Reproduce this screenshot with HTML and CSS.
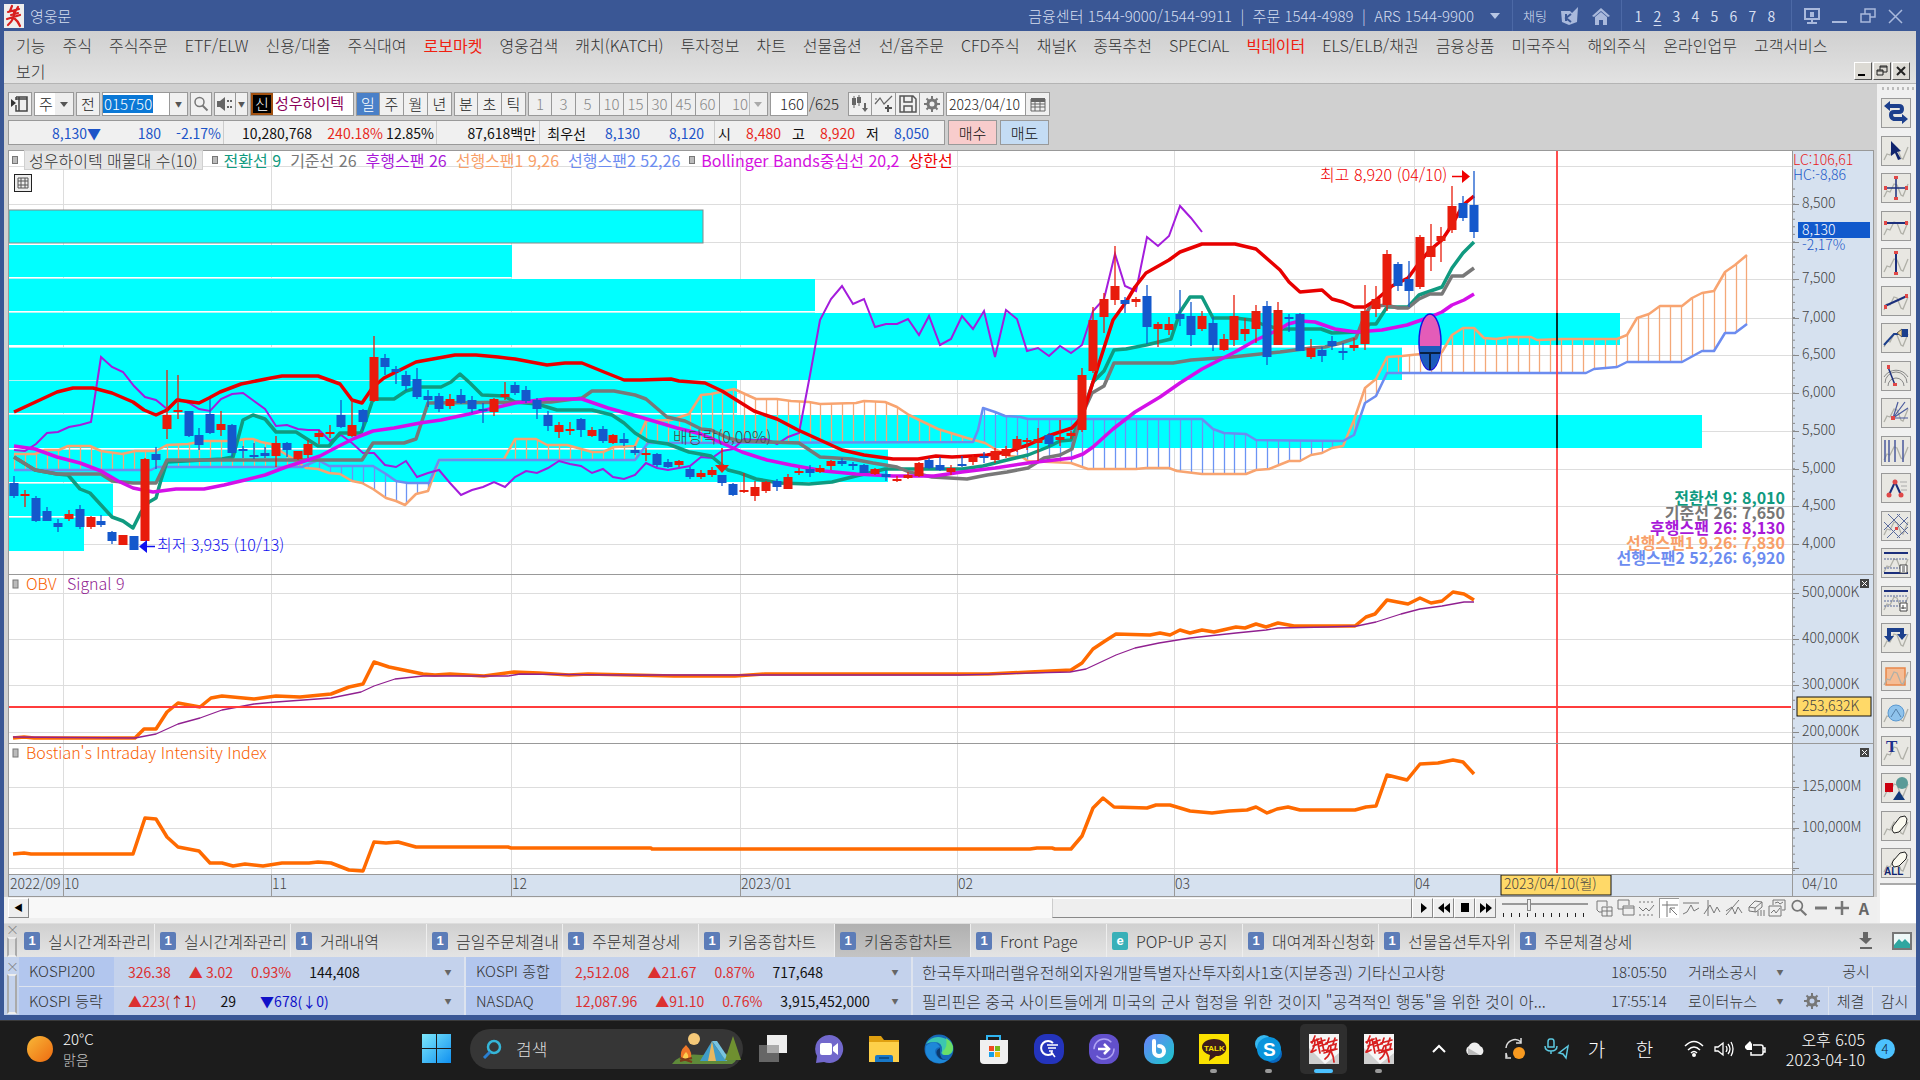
FILE: index.html
```html
<!DOCTYPE html>
<html lang="ko">
<head>
    <meta charset="UTF-8">
    <meta name="viewport" content="width=device-width, initial-scale=1.0">
    <title>영웅문</title>
    <link rel="stylesheet" href="styles.css">
</head>
<body>
    <svg class="defs" aria-hidden="true">
        <symbol id="wave" viewBox="0 0 26 26"><path d="M1 22l3-6 3 1 4-8 3 1 4 10 2 1 5-12" fill="none" stroke="#b0b0a8" stroke-width="1.3"/></symbol>
        <symbol id="hero" viewBox="0 0 30 30"><path d="M0 0h30v30H0z" fill="#f6f6f6"/><path d="M0 14l16 16H0zM16 30L30 19v11z" fill="#cfcfcf"/><path d="M6 2L3 9M2 8l8-3M4 12l8-3M6 6q0 7-4 12M8 5l3 14M3 18l4-2M12 4l3 13M10 8l6-2M11 12l6-2M13 17l4-1M20 4l-2 6M26 4l-2 6M17 9l11-3M20 12l-2 5 8-2 1-5-7 2M15 19l13-4M22 11q0 10-6 14M22 17q3 6 3 11" fill="none" stroke="#d81e1e" stroke-width="1.700" stroke-linecap="round"/></symbol>
        <symbol id="gear" viewBox="0 0 16 16"><circle cx="8" cy="8" r="4" fill="none" stroke="#777" stroke-width="3"/><path d="M8 0v3M8 13v3M0 8h3M13 8h3M2.500 2.500l2 2M11.500 11.500l2 2M2.500 13.500l2-2M11.500 4.500l2-2" stroke="#777" stroke-width="2"/></symbol>
        <symbol id="glass" viewBox="0 0 16 16"><circle cx="6.500" cy="6" r="4.500" fill="none" stroke="#777" stroke-width="1.500"/><path d="M9.500 9.500l5 5" stroke="#777" stroke-width="2"/></symbol>
    </svg>

    <div class="app">
        <header class="titlebar">
            <svg class="logo" viewBox="0 0 20 24"><path d="M0 0h20v24H0z" fill="#eee"/><path d="M8 2L6 7M14 3l-3 5M4 8l11-3M7 11l7-2M3 15l13-4M10 7q1 8-6 14M10 14q4 3 6 8" fill="none" stroke="#d81e1e" stroke-width="2.200" stroke-linecap="round"/></svg>
            <span class="app-name">영웅문</span>
            <span class="contacts">금융센터 1544-9000/1544-9911&nbsp; |&nbsp; 주문 1544-4989&nbsp; |&nbsp; ARS 1544-9900</span>
            <button class="title-btn" aria-label="연락처 더보기"><svg width="10" height="6"><path d="M0 0h10L5 6z" fill="#b7c6e4"/></svg></button>
            <div class="title-tools">
                <button class="title-btn">채팅</button>
                <button class="title-btn" aria-label="키움"><svg width="20" height="20" viewBox="0 0 20 20"><path d="M2 5h9l2 2 6-6-1 15-8 3-7-3z" fill="#a9b9dc"/><path d="M7 8v7M12 8l-5 4 5 4" stroke="#3a5795" stroke-width="2" fill="none"/></svg></button>
                <button class="title-btn" aria-label="홈"><svg width="20" height="20" viewBox="0 0 20 20"><path d="M10 2L1 10l2 1 7-6 7 6 2-1zM4 11l6-5 6 5v8h-4v-5H8v5H4z" fill="#a9b9dc"/></svg></button>
            </div>
            <nav class="screens">
                <button>1</button><button class="current">2</button><button>3</button><button>4</button><button>5</button><button>6</button><button>7</button><button>8</button>
            </nav>
            <div class="window-btns">
                <button class="title-btn" aria-label="화면"><svg width="16" height="18" viewBox="0 0 16 18"><path d="M1 2h14v10H1zM8 12v4M3 16h10" fill="none" stroke="#a9b9dc" stroke-width="2"/><path d="M6 5h4v5H6z" fill="#a9b9dc"/></svg></button>
                <button class="title-btn" aria-label="최소화"><svg width="16" height="18"><path d="M0 14h15v2H0z" fill="#a9b9dc"/></svg></button>
                <button class="title-btn" aria-label="복원"><svg width="16" height="18" viewBox="0 0 16 18"><path d="M1 7h9v8H1zM5 7V2h10v8h-5" fill="none" stroke="#a9b9dc" stroke-width="1.500"/></svg></button>
                <button class="title-btn" aria-label="닫기"><svg width="16" height="18" viewBox="0 0 16 18"><path d="M1 3l13 13M14 3L1 16" stroke="#a9b9dc" stroke-width="1.500"/></svg></button>
            </div>
        </header>

        <nav class="menubar">
            <a href="#">기능</a><a href="#">주식</a><a href="#">주식주문</a><a href="#">ETF/ELW</a><a href="#">신용/대출</a><a href="#">주식대여</a><a href="#" class="hot">로보마켓</a><a href="#">영웅검색</a><a href="#">캐치(KATCH)</a><a href="#">투자정보</a><a href="#">차트</a><a href="#">선물옵션</a><a href="#">선/옵주문</a><a href="#">CFD주식</a><a href="#">채널K</a><a href="#">종목추천</a><a href="#">SPECIAL</a><a href="#" class="hot">빅데이터</a><a href="#">ELS/ELB/채권</a><a href="#">금융상품</a><a href="#">미국주식</a><a href="#">해외주식</a><a href="#">온라인업무</a><a href="#">고객서비스</a>
            <div class="menu-row2">
                <a href="#">보기</a>
                <span class="mdi">
                    <button aria-label="창 최소화"><svg width="12" height="12"><path d="M1 9h7v2H1z"/></svg></button>
                    <button aria-label="창 복원"><svg width="12" height="12"><path d="M1 5h6v5H1zM1 6h6M4 5V1h7v6H7M4 2h7" fill="none" stroke="#222"/></svg></button>
                    <button aria-label="창 닫기"><svg width="12" height="12"><path d="M2 2l8 8M10 2l-8 8" stroke="#222" stroke-width="2"/></svg></button>
                </span>
            </div>
        </nav>

        <div class="work">
            <main class="chart-window">
                <div class="toolbar">
                    <button class="tb icon" aria-label="패널"><svg width="18" height="16"><path d="M5 1h11v14H5V9M5 1v3M8 1v14M5 3h11" fill="none" stroke="#444" stroke-width="1.500"/><path d="M0 3l5 4-5 4z" fill="#333"/></svg></button>
                    <select class="kind" aria-label="구분"><option>주</option></select>
                    <button class="tb">전</button>
                    <div class="code">
                        <input type="text" value="015750" aria-label="종목코드">
                        <button class="tb arrow" aria-label="종목 목록">▼</button>
                    </div>
                    <button class="tb tight" aria-label="종목 검색"><svg width="16" height="16"><use href="#glass"/></svg></button>
                    <div class="joined">
                        <button class="tb tight" aria-label="소리"><svg width="18" height="16"><path d="M1 5h3l5-4v14l-5-4H1z" fill="#666"/><path d="M12 4v2M12 10v2M15 4v2M15 10v2" stroke="#666" stroke-width="2"/></svg></button>
                        <button class="tb arrow slim" aria-label="소리 설정">▼</button>
                    </div>
                    <div class="stock"><b>신</b><span>성우하이텍</span></div>
                    <div class="joined">
                        <button class="tb on">일</button><button class="tb">주</button><button class="tb">월</button><button class="tb">년</button>
                    </div>
                    <div class="joined">
                        <button class="tb">분</button><button class="tb">초</button><button class="tb">틱</button>
                    </div>
                    <div class="joined off">
                        <button class="tb">1</button><button class="tb">3</button><button class="tb">5</button><button class="tb">10</button><button class="tb">15</button><button class="tb">30</button><button class="tb">45</button><button class="tb">60</button>
                        <select class="unit" aria-label="분 단위" disabled><option>10</option></select>
                    </div>
                    <div class="count"><input type="text" value="160" aria-label="봉 개수"><span>/625</span></div>
                    <div class="joined tools">
                        <button class="tb icon" aria-label="차트 종류"><svg width="20" height="20"><path d="M4 2v12M9 1v11" stroke="#666"/><path d="M2 4h4v7H2zM7 3h4v6H7z" fill="#666"/><path d="M15 9v7" stroke="#666" stroke-width="2"/><path d="M12 14h6l-3 4z" fill="#666"/></svg></button>
                        <button class="tb icon" aria-label="지표 추가"><svg width="20" height="20"><path d="M1 10l5-6 4 6 8-8M1 5h2" fill="none" stroke="#666" stroke-width="1.200"/><path d="M14 11v7M11 14h7" stroke="#555" stroke-width="2"/></svg></button>
                        <button class="tb icon" aria-label="저장"><svg width="20" height="20"><path d="M2 2h13l3 3v13H2zM6 2v6h8V2M6 18v-6h8v6" fill="none" stroke="#555" stroke-width="1.500"/></svg></button>
                        <button class="tb icon" aria-label="설정"><svg width="16" height="16"><use href="#gear"/></svg></button>
                    </div>
                    <div class="date"><input type="text" value="2023/04/10" aria-label="날짜"><button class="tb" aria-label="달력"><svg width="16" height="16"><path d="M1 3h14v12H1zM1 8h14M1 11h14M5 5v10M10 5v10" fill="none" stroke="#666"/><path d="M1 2h14v4H1z" fill="#666"/></svg></button></div>
                </div>

                <div class="quote">
                    <div class="quote-box">
                        <div class="cell q-price"><span class="down">8,130▼</span><span class="down">180</span><span class="down">-2.17%</span></div>
                        <div class="cell q-volume"><span>10,280,768</span><span class="up">240.18%</span><span>12.85%</span></div>
                        <div class="cell q-amount"><span>87,618백만</span></div>
                        <div class="cell q-best"><span>최우선</span><span class="down">8,130</span><span class="down">8,120</span></div>
                        <div class="cell q-ohl"><span>시</span><span class="up">8,480</span><span>고</span><span class="up">8,920</span><span>저</span><span class="down">8,050</span></div>
                    </div>
                    <button class="buy">매수</button>
                    <button class="sell">매도</button>
                </div>

                <div class="chart">
                    <svg id="chart" viewBox="8 150 1866 747" role="img" aria-label="성우하이텍 일봉 차트"></svg>
                    <div class="legend">
                        <span class="box"></span><span class="picked">성우하이텍 매물대 수(10)</span>
                        <span class="box"></span><span class="teal">전환선 9</span><span class="gray">기준선 26</span><span class="purple">후행스팬 26</span><span class="orange">선행스팬1 9,26</span><span class="blue">선행스팬2 52,26</span>
                        <span class="box"></span><span class="magenta">Bollinger Bands중심선 20,2</span><span class="red">상한선</span>
                    </div>
                    <button class="grid-btn" aria-label="데이터 표"><svg width="12" height="12"><path d="M1 1h10v10H1zM1 4h10M1 8h10M4 1v10M8 1v10" fill="none" stroke="#555"/></svg></button>
                </div>

                <div class="scroll-row">
                    <button class="sb" aria-label="왼쪽으로">◀</button>
                    <div class="track"><div class="thumb"></div></div>
                    <button class="sb" aria-label="오른쪽으로"><svg width="16" height="14"><path d="M6 2l6 5-6 5z"/></svg></button>
                    <button class="sb" aria-label="빨리 뒤로"><svg width="16" height="14"><path d="M8 2v10L2 7zM14 2v10L8 7z"/></svg></button>
                    <button class="sb" aria-label="정지"><svg width="16" height="14"><path d="M4 2h8v9H4z"/></svg></button>
                    <button class="sb" aria-label="빨리 앞으로"><svg width="16" height="14"><path d="M2 2v10l6-5zM8 2v10l6-5z"/></svg></button>
                    <input class="speed" type="range" min="0" max="10" value="3" aria-label="재생 속도">
                    <div class="mini-tools">
                        <button aria-label="창 추가"><svg viewBox="0 0 18 18"><path d="M2 2h10v5M7 13H4l-2-2V2M7 8h10v9H7zM12 8v9M7 12h10"/></svg></button>
                        <button aria-label="창 겹치기"><svg viewBox="0 0 18 18"><path d="M1 1h11v5M6 10H1V1M6 7h11v9H6zM6 9h11"/></svg></button>
                        <button aria-label="영역"><svg viewBox="0 0 18 18"><path d="M1 3h16M1 16h16" stroke-dasharray="2 2"/><path d="M1 8l4 4 3-3 3 3 5-6"/></svg></button>
                        <button class="pressed" aria-label="십자선"><svg viewBox="0 0 18 18"><path d="M1 5h16M6 1v16M9 8l7 7M9 13V8h5"/></svg></button>
                        <button aria-label="수평선"><svg viewBox="0 0 18 18"><path d="M1 4h16M1 15l4-2 4-7 3 6 5-3"/></svg></button>
                        <button aria-label="수직선"><svg viewBox="0 0 18 18"><path d="M5 1v16M1 15l6-9 4 8 3-6 3 5"/></svg></button>
                        <button aria-label="추세선"><svg viewBox="0 0 18 18"><path d="M1 16L14 1M1 12l6-4 3 7 3-7 4 6"/></svg></button>
                        <button aria-label="전체 지우기"><svg viewBox="0 0 18 18"><path d="M2 8l6-6 7 1v5l-6 5-7-1zM2 8l6 1 7-6M8 9v4M11 12v5M14 11v6M17 11v6"/></svg></button>
                        <button aria-label="차트 복사"><svg viewBox="0 0 18 18"><path d="M5 6V1h12v10h-3M1 7h12v10H1zM3 14l3-3 2 3 4-5M7 4l3-1 2 2 3-2"/></svg></button>
                        <button aria-label="확대경"><svg viewBox="0 0 16 16"><use href="#glass"/></svg></button>
                        <button aria-label="축소"><svg viewBox="0 0 18 18"><path d="M3 9h12" stroke-width="3"/></svg></button>
                        <button aria-label="확대"><svg viewBox="0 0 18 18"><path d="M2 9h14M9 2v14" stroke-width="2.500"/></svg></button>
                        <button class="letter">A</button>
                    </div>
                </div>
            </main>

            <aside class="palette">
                <div class="grip"></div>
                <div class="palette-tools">
                    <button aria-label="전환"><svg viewBox="0 0 26 26"><path d="M5 6h11q3 0 3 3t-3 3h-5q-3 0-3 3t3 4h9" fill="none" stroke="#1c3f8c" stroke-width="4"/><path d="M7 1v10L1 6zM19 14v10l6-5z" fill="#1c3f8c"/></svg></button>
                    <button aria-label="선택"><svg viewBox="0 0 26 26"><use href="#wave"/><path d="M8 3l10 10-4 1 4 7-3 1-3-7-4 3z" fill="#10246e"/></svg></button>
                    <button aria-label="십자선"><svg viewBox="0 0 26 26"><use href="#wave"/><path d="M2 13h22M13 2v22" stroke="#1c2f7c" stroke-width="1.500"/><path d="M1 11h3v4H1zM22 11h3v4h-3zM11 1h4v3h-4zM11 22h4v3h-4z" fill="#e04848"/></svg></button>
                    <button aria-label="수평선"><svg viewBox="0 0 26 26"><use href="#wave"/><path d="M2 10h22" stroke="#1c2f7c" stroke-width="2"/><path d="M1 8h3v4H1zM22 8h3v4h-3z" fill="#e04848"/></svg></button>
                    <button aria-label="수직선"><svg viewBox="0 0 26 26"><use href="#wave"/><path d="M13 2v22" stroke="#1c2f7c" stroke-width="2"/><path d="M11 1h4v3h-4zM11 22h4v3h-4z" fill="#e04848"/></svg></button>
                    <button aria-label="추세선"><svg viewBox="0 0 26 26"><use href="#wave"/><path d="M2 18L24 8" stroke="#1c2f7c" stroke-width="2"/><path d="M1 17h3v4H1zM22 6h3v4h-3z" fill="#e04848"/></svg></button>
                    <button aria-label="연필"><svg viewBox="0 0 26 26"><use href="#wave"/><path d="M1 20L11 9h7" fill="none" stroke="#1c3f8c" stroke-width="2"/><path d="M14 8l5-4v8z" fill="#f0d090" stroke="#555"/><path d="M19 4h6v8h-6z" fill="#1c3f8c"/></svg></button>
                    <button aria-label="피보나치 원호"><svg viewBox="0 0 26 26"><path d="M2 20a11 11 0 0 1 22 0M5 23a8 8 0 0 1 16 0M1 14a14 14 0 0 1 24 0" fill="none" stroke="#888"/><path d="M5 4l7 18" stroke="#1c2f7c" stroke-width="1.500"/><path d="M4 2h3v4H4zM10 20h4v3h-4z" fill="#e04848"/></svg></button>
                    <button aria-label="팬"><svg viewBox="0 0 26 26"><use href="#wave"/><path d="M10 18L15 2M10 18L22 2M10 18l15-10M10 18h15" stroke="#4a5a9c" stroke-width="1.200"/><path d="M8 16h4v4H8z" fill="#e04848"/></svg></button>
                    <button aria-label="시간대"><svg viewBox="0 0 26 26"><use href="#wave"/><path d="M2 2v22M6 2v22M12 2v22M20 2v22" stroke="#4a5a9c" stroke-width="1.500"/></svg></button>
                    <button aria-label="각도"><svg viewBox="0 0 26 26"><path d="M6 20l6-13 6 13" fill="none" stroke="#1c2f7c" stroke-width="2"/><path d="M17 7h7M18 11h6M18 15h6" stroke="#aaa"/><circle cx="12" cy="7" r="2.500" fill="#e04848"/><circle cx="6" cy="20" r="2.500" fill="#e04848"/><circle cx="18" cy="20" r="2.500" fill="#e04848"/></svg></button>
                    <button aria-label="격자"><svg viewBox="0 0 26 26"><use href="#wave"/><path d="M1 9l16 16M5 1l20 20M14 1l11 11M1 17L17 1M4 25L25 4M14 25l11-11" stroke="#5a6a9c"/><path d="M12 14h3v3h-3z" fill="#e04848"/></svg></button>
                    <button aria-label="밴드 3"><svg viewBox="0 0 26 26"><use href="#wave"/><path d="M1 3h24M1 23h24" stroke="#1c2f7c" stroke-width="2"/><path d="M1 9h24M1 18h24" stroke="#5a6a9c" stroke-dasharray="2 1"/><path d="M17 15h7v8h-7zM19 17h3M19 19h3M19 21h3" fill="#fff" stroke="#444"/></svg></button>
                    <button aria-label="밴드 4"><svg viewBox="0 0 26 26"><use href="#wave"/><path d="M1 3h24" stroke="#1c2f7c" stroke-width="2"/><path d="M1 8h24M1 13h24M1 18h24" stroke="#5a6a9c" stroke-dasharray="2 1"/><path d="M17 15h7v8h-7zM20 17v4M18 20h5" fill="#fff" stroke="#444"/></svg></button>
                    <button aria-label="되돌림"><svg viewBox="0 0 26 26"><use href="#wave"/><path d="M6 12V5h13v5" fill="none" stroke="#1c3f8c" stroke-width="4"/><path d="M1 11h10l-5 6zM14 9h10l-5 6z" fill="#1c3f8c"/></svg></button>
                    <button aria-label="사각형"><svg viewBox="0 0 26 26"><path d="M3 5h19v17H3z" fill="#f5bc94" stroke="#e8864a" stroke-width="1.500"/><use href="#wave"/></svg></button>
                    <button aria-label="원"><svg viewBox="0 0 26 26"><use href="#wave"/><circle cx="13" cy="13" r="8" fill="#8fc3ec" stroke="#5a98d0"/><path d="M8 17l5-8 5 8" fill="none" stroke="#5580a8"/></svg></button>
                    <button aria-label="문자"><svg viewBox="0 0 26 26"><use href="#wave"/><text x="3" y="14" class="ico-t">T</text></svg></button>
                    <button aria-label="도형"><svg viewBox="0 0 26 26"><use href="#wave"/><path d="M2 8h8v9H2z" fill="#cc0010"/><circle cx="19" cy="8" r="6" fill="#5a9a98"/><path d="M16 16l6 9H10z" fill="#123a7c"/></svg></button>
                    <button aria-label="지우개"><svg viewBox="0 0 26 26"><use href="#wave"/><path d="M10 13l7-9 5-1 2 3-1 5-7 8-5 1-2-3z" fill="#fbfaf0" stroke="#222"/></svg></button>
                    <button aria-label="모두 지우기"><svg viewBox="0 0 26 26"><use href="#wave"/><path d="M10 11l7-8 5-1 2 3-1 4-7 7-5 1-2-3z" fill="#fbfaf0" stroke="#222"/><text x="1" y="25" class="ico-all">ALL</text></svg></button>
                </div>
                <div class="palette-rest"></div>
            </aside>
        </div>

        <nav class="tabs">
            <span class="handle">×</span>
            <button><i>1</i>실시간계좌관리</button>
            <button><i>1</i>실시간계좌관리</button>
            <button><i>1</i>거래내역</button>
            <button><i>1</i>금일주문체결내</button>
            <button><i>1</i>주문체결상세</button>
            <button><i>1</i>키움종합차트</button>
            <button class="active"><i>1</i>키움종합차트</button>
            <button><i>1</i>Front Page</button>
            <button><i class="web">e</i>POP-UP 공지</button>
            <button><i>1</i>대여계좌신청화</button>
            <button><i>1</i>선물옵션투자위</button>
            <button><i>1</i>주문체결상세</button>
            <span class="tabs-end">
                <svg width="14" height="18"><path d="M4 0h5v6h4l-6 6-7-6h4zM1 15h12v2H1z" fill="#666"/></svg>
                <svg class="pic" width="20" height="18"><path d="M1 1h18v16H1z" fill="#eef8f8" stroke="#777" stroke-width="2"/><path d="M2 13l5-6 3 3 3-3 5 5v4H2z" fill="#2fa6a0"/></svg>
            </span>
        </nav>

        <section class="ticker">
            <span class="handle">×</span>
            <div class="index">
                <b>KOSPI200</b>
                <p><span class="rise">326.38</span><span class="rise">▲ 3.02</span><span class="rise">0.93%</span><span>144,408</span></p>
                <button aria-label="지수 선택">▼</button>
            </div>
            <div class="index">
                <b>KOSPI 종합</b>
                <p><span class="rise">2,512.08</span><span class="rise">▲21.67</span><span class="rise">0.87%</span><span>717,648</span></p>
                <button aria-label="지수 선택">▼</button>
            </div>
            <div class="news">
                <a href="#">한국투자패러랠유전해외자원개발특별자산투자회사1호(지분증권) 기타신고사항</a>
                <time>18:05:50</time><span class="source">거래소공시</span><button aria-label="공시 선택">▼</button><span class="side wide">공시</span>
            </div>
            <div class="index">
                <b>KOSPI 등락</b>
                <p class="wide"><span class="rise">▲223(<em>↑1</em>)</span><span>29</span><span class="fall">▼678(↓0)</span></p>
                <button aria-label="지수 선택">▼</button>
            </div>
            <div class="index">
                <b>NASDAQ</b>
                <p><span class="rise">12,087.96</span><span class="rise">▲91.10</span><span class="rise">0.76%</span><span>3,915,452,000</span></p>
                <button aria-label="지수 선택">▼</button>
            </div>
            <div class="news">
                <a href="#">필리핀은 중국 사이트들에게 미국의 군사 협정을 위한 것이지 "공격적인 행동"을 위한 것이 아...</a>
                <time>17:55:14</time><span class="source">로이터뉴스</span><button aria-label="뉴스 선택">▼</button><svg class="cog" width="16" height="16"><use href="#gear"/></svg><span class="side">체결</span><span class="side">감시</span>
            </div>
        </section>
    </div>

    <footer class="taskbar">
        <div class="weather">
            <svg width="26" height="26"><defs><linearGradient id="sun" x2="1" y2="1"><stop stop-color="#f8b838"/><stop offset="1" stop-color="#ee6a10"/></linearGradient></defs><circle cx="13" cy="13" r="13" fill="url(#sun)"/></svg>
            <span>20°C<br><small>맑음</small></span>
        </div>
        <div class="apps">
            <button aria-label="시작"><svg width="30" height="30" viewBox="0 0 30 30"><defs><linearGradient id="win" x2="1" y2="1"><stop stop-color="#7de8fb"/><stop offset="1" stop-color="#1090f0"/></linearGradient></defs><path d="M0 0h14v14H0zM15 0h14v14H15zM0 15h14v14H0zM15 15h14v14H15z" fill="url(#win)"/></svg></button>
            <label class="search">
                <svg width="20" height="20"><circle cx="12" cy="8" r="6" fill="none" stroke="#35b6d8" stroke-width="2.500"/><path d="M8 13l-6 6" stroke="#2a7fd0" stroke-width="3"/></svg>
                <input type="text" placeholder="검색" aria-label="검색">
                <svg width="70" height="32" viewBox="0 0 70 32"><path d="M0 31q8-12 30-9 25-3 34 0 2 6-4 9z" fill="#5f8a3a"/><circle cx="22" cy="6" r="6" fill="#f4c878"/><path d="M40 8l14 20H28z" fill="#3f9cc8"/><path d="M40 8l4 20h-8z" fill="#e8b860"/><path d="M40 8l14 20 3-2L45 8z" fill="#78c4e0"/><path d="M14 12q8 8 4 15H10q-4-8 4-15z" fill="#f07828"/><path d="M14 19q4 4 1 8h-4q-1-4 3-8z" fill="#fcd050"/><path d="M8 28l12-3M8 25l12 4" stroke="#7a3a18" stroke-width="2"/><path d="M61 3l8 24H53z" fill="#6f9030"/></svg>
            </label>
            <button aria-label="작업 보기"><svg width="30" height="30"><path d="M0 11h20v17H0z" fill="#666"/><path d="M8 1h20v18H8z" fill="#eee"/><path d="M8 11h12v8H8z" fill="#aaa"/></svg></button>
            <button aria-label="채팅"><svg width="30" height="30"><path d="M15 1a14 14 0 1 1-5 27l-8 1 1-7A14 14 0 0 1 15 1z" fill="#7268cc"/><rect x="6" y="9" width="12" height="12" rx="2" fill="#fff"/><path d="M19 13l5-4v12l-5-4z" fill="#fff"/></svg></button>
            <button aria-label="탐색기"><svg width="30" height="30"><path d="M0 2h12l3 4h15v22H0z" fill="#e0a010"/><path d="M0 8h30v20H0z" fill="#fdd04a"/><path d="M6 28v-5q0-2 2-2h14q2 0 2 2v5z" fill="#1878c8"/><path d="M10 24h10" stroke="#0d508c" stroke-width="2"/></svg></button>
            <button aria-label="Edge"><svg width="30" height="30"><circle cx="15" cy="15" r="14.500" fill="#1668b8"/><path d="M2 10A15 15 0 0 1 29 14q0 8-9 7-4-1-2-4 1-9-8-9-5 0-8 2z" fill="#3cc6b0"/><path d="M22 4q8 5 7 11-1 6-8 6-4-1-2-4 5-4 3-13z" fill="#6ade68"/><path d="M2 12q9-8 14 1-7 1-4 8 4 7 13 4Q16 33 6 26 0 20 2 12z" fill="#1e88d8"/><path d="M16 14q-5 2-3 7 4 7 13 4-10 3-10-7z" fill="#0c3a6c"/></svg></button>
            <button aria-label="Store"><svg width="30" height="30"><path d="M8 7V2h13v5" fill="none" stroke="#30b4f0" stroke-width="2"/><path d="M1 6h28v20q0 4-4 4H5q-4 0-4-4z" fill="#f0f0f0"/><path d="M10 12h5v5h-5z" fill="#f04a20"/><path d="M16 12h5v5h-5z" fill="#78b818"/><path d="M10 18h5v5h-5z" fill="#18a0e8"/><path d="M16 18h5v5h-5z" fill="#f8b810"/></svg></button>
            <button aria-label="검색 도구"><svg width="30" height="30"><rect width="30" height="30" rx="12" fill="#2434bc"/><path d="M19 9a7 7 0 1 0 0 10" fill="none" stroke="#fff" stroke-width="2"/><path d="M17 18l4 5M13 11h11M14 14h8M15 17h4" stroke="#fff" stroke-width="1.500"/></svg></button>
            <button aria-label="이동"><svg width="30" height="30"><rect width="30" height="30" rx="12" fill="#6250cc"/><circle cx="15" cy="15" r="10" fill="none" stroke="#b0a4f4" stroke-width="1.500" stroke-dasharray="24 7"/><path d="M9 15h10M15 10l5 5-5 5" fill="none" stroke="#fff" stroke-width="2.500"/></svg></button>
            <button aria-label="빅스비"><svg width="30" height="30"><defs><linearGradient id="bx" x2="1" y2="1"><stop stop-color="#6a80fc"/><stop offset="1" stop-color="#18c8c8"/></linearGradient></defs><rect width="30" height="30" rx="12" fill="url(#bx)"/><path d="M10 7v10a5 5 0 1 0 5-5" fill="none" stroke="#fff" stroke-width="4" stroke-linecap="round"/></svg></button>
            <button class="run" aria-label="카카오톡"><svg width="30" height="30"><path d="M0 0h30v30H0z" fill="#fae100"/><path d="M15 5c16 0 16 17 2 17l-7 5 1-6C-2 17 2 5 15 5z" fill="#3b1c1c"/><text x="5" y="17" class="ico-talk">TALK</text></svg></button>
            <button class="run" aria-label="Skype"><svg width="30" height="30"><circle cx="10" cy="10" r="9" fill="#38b8f0"/><circle cx="19" cy="20" r="9" fill="#0868c0"/><circle cx="15" cy="15" r="12" fill="#0a94dc"/><text x="9" y="22" class="ico-s">S</text></svg></button>
            <button class="run focus" aria-label="영웅문"><svg width="30" height="30"><use href="#hero"/></svg></button>
            <button class="run" aria-label="영웅문"><svg width="30" height="30"><use href="#hero"/></svg></button>
        </div>
        <div class="tray">
            <svg width="14" height="10"><path d="M1 8l6-6 6 6" fill="none" stroke="#fff" stroke-width="2"/></svg>
            <svg width="22" height="18"><path d="M5 15a5 5 0 0 1 0-9 6 6 0 0 1 11 0 5 5 0 0 1 1 9z" fill="#eee"/><path d="M4 8l12 7H4z" fill="#bbb"/></svg>
            <svg width="22" height="24"><path d="M2 11a9 9 0 0 1 15-6M17 1v5h-5M2 16v5h5M3 20l-1-4" fill="none" stroke="#ddd" stroke-width="1.500"/><circle cx="15" cy="16" r="6" fill="#f89a20"/></svg>
            <svg width="26" height="22"><path d="M6 1h2q2 0 2 3v5H4V4q0-3 2-3zM1 8q0 5 6 5t6-5M7 13v3" fill="none" stroke="#5cc8e0" stroke-width="1.500"/><path d="M24 8l-9 7 4 1 3 4z" fill="none" stroke="#5cc8e0" stroke-width="1.500"/></svg>
            <span class="ime">가</span>
            <span class="ime">한</span>
            <span class="status">
                <svg width="20" height="18"><path d="M1 6q9-9 18 0M4 10q6-6 12 0M7 13q3-3 6 0" fill="none" stroke="#fff" stroke-width="1.500"/><circle cx="10" cy="15" r="2" fill="#fff"/></svg>
                <svg width="20" height="18"><path d="M1 7h3l5-4v12l-5-4H1zM12 6q2 3 0 6M14 4q4 5 0 10M17 2q4 7 0 14" fill="none" stroke="#fff" stroke-width="1.300"/></svg>
                <svg width="22" height="18"><path d="M9 5h8q2 0 2 2v6q0 2-2 2H7v-3M19 8h2v4h-2" fill="none" stroke="#fff" stroke-width="1.500"/><path d="M1 6L6 1l2 3v6H3l-2-2z" fill="#fff"/></svg>
            </span>
            <time>오후 6:05<br>2023-04-10</time>
            <span class="badge">4</span>
        </div>
    </footer>

    <script src="chart.js"></script>
</body>
</html>
```

FILE: styles.css
```css
* {
    box-sizing: border-box;
}
body {
    margin: 0;
    min-height: 100vh;
    display: flex;
    flex-direction: column;
    background: #1c1c1c;
    color: #333;
    font-family: "Noto Sans CJK KR", "Liberation Sans", sans-serif;
    font-size: 15px;
    line-height: 20px;
    font-weight: 300;
}
button, input, select {
    font: inherit;
    color: inherit;
    margin: 0;
    padding: 0;
    border: 0;
    background: none;
}
select {
    appearance: none;
}
a {
    color: inherit;
    text-decoration: none;
}
svg {
    display: block;
    flex: none;
}
.defs {
    position: absolute;
    width: 0;
    height: 0;
}
.app {
    flex: 1;
    display: flex;
    flex-direction: column;
    padding: 0 4px 5px;
    background: #3a5795;
    white-space: nowrap;
}

/* title bar */
.titlebar {
    display: flex;
    align-items: center;
    height: 31px;
    color: #d5def0;
}
.logo {
    width: 20px;
    height: 24px;
}
.app-name {
    margin-left: 6px;
    flex: 1;
}
.title-btn {
    display: flex;
    align-items: center;
}
.contacts {
    margin-right: 16px;
}
.title-tools, .window-btns {
    display: flex;
    align-items: center;
    height: 31px;
    gap: 12px;
    padding: 0 10px;
    border-left: 1px solid #4c69a6;
}
.title-tools {
    margin-left: 12px;
    font-size: 13px;
}
.screens {
    display: flex;
    height: 31px;
    align-items: center;
    padding: 0 10px 0 7px;
    border-left: 1px solid #4c69a6;
}
.screens button {
    width: 19px;
    font-size: 14px;
    font-weight: 400;
}
.screens .current {
    text-decoration: underline;
    text-underline-offset: 3px;
}
.window-btns {
    padding: 0 12px;
}

/* menu */
.menubar {
    display: flex;
    flex-wrap: wrap;
    column-gap: 17px;
    padding: 0 6px 0 12px;
    height: 53px;
    font-size: 16px;
    line-height: 28px;
    color: #333;
    background: linear-gradient(#d0d0d0, #e2e2e2);
    border-bottom: 1px solid #b4b4b4;
}
.menubar .hot {
    color: #f02010;
    font-weight: 400;
}
.menu-row2 {
    flex-basis: 100%;
    display: flex;
    justify-content: space-between;
    align-items: center;
    line-height: 24px;
}
.mdi {
    display: flex;
    gap: 1px;
}
.mdi button {
    width: 18px;
    height: 18px;
    padding: 2px;
    border: 1px solid;
    border-color: #fff #555 #555 #fff;
    background: #dcdad4;
}

.work {
    flex: 1;
    display: flex;
    background: #d0d0d0;
}
.chart-window {
    flex: 1;
    min-width: 0;
    padding: 8px 3px 0 4px;
}

/* toolbar */
.toolbar {
    display: flex;
    gap: 2px;
    height: 24px;
    color: #222;
}
.tb, .kind {
    display: flex;
    align-items: center;
    justify-content: center;
    width: 24px;
    height: 24px;
    border: 1px solid #999;
    background: #f0f0f0;
}
.kind {
    width: 40px;
    padding-left: 4px;
    background: #fff url("data:image/svg+xml,%3Csvg xmlns='http://www.w3.org/2000/svg' width='18' height='22'%3E%3Cpath d='M0 0h18v22H0z' fill='%23eee'/%3E%3Cpath d='M5 9h8l-4 5z' fill='%23555'/%3E%3C/svg%3E") right center no-repeat;
}
.arrow {
    width: 18px;
    border: 0;
    border-left: 1px solid #999;
    height: 22px;
    font-size: 7px;
    color: #555;
}
.slim {
    width: 12px;
    height: 24px;
    border: 1px solid #999;
}
.tight {
    width: 22px;
}
.code {
    display: flex;
    width: 86px;
    border: 1px solid #999;
    background: #fff;
}
.code input {
    width: 66px;
    height: 18px;
    margin-top: 2px;
    padding-left: 1px;
    color: #fff;
    background: linear-gradient(90deg, #0a78d6 50px, #fff 50px);
}
.joined {
    display: flex;
}
.joined .tb + .tb {
    border-left: 0;
}
.joined .on {
    background: #4a80c8;
    color: #fff;
}
.stock {
    display: flex;
    width: 104px;
    border: 1px solid #999;
    background: #fff;
    color: #8c0058;
    line-height: 20px;
    font-weight: 400;
}
.stock b {
    width: 22px;
    margin-right: 2px;
    border: 2px solid #a05010;
    background: #000;
    color: #fff;
    font-weight: 300;
    line-height: 18px;
    text-align: center;
}
.off .tb, .unit {
    background: #efefef;
    color: #888;
}
.unit {
    width: 48px;
    height: 24px;
    padding-left: 12px;
    border: 1px solid #999;
    border-left: 0;
    opacity: 1;
    background: #efefef url("data:image/svg+xml,%3Csvg xmlns='http://www.w3.org/2000/svg' width='18' height='22'%3E%3Cpath d='M.5 0v22' stroke='%23bbb'/%3E%3Cpath d='M5 9h8l-4 5z' fill='%23aaa'/%3E%3C/svg%3E") right center no-repeat;
}
.count {
    display: flex;
    line-height: 24px;
    width: 76px;
}
.count input {
    width: 38px;
    border: 1px solid #999;
    background: #fff;
    text-align: right;
    padding-right: 3px;
    margin-right: 1px;
}
.date {
    display: flex;
    height: 24px;
}
.date input {
    width: 80px;
    border: 1px solid #999;
    background: #fff;
    font-size: 14px;
    padding-left: 2px;
}
.date .tb {
    border-left: 0;
}

/* quote line */
.quote {
    display: flex;
    gap: 3px;
    height: 25px;
    margin-top: 4px;
    color: #111;
}
.quote-box {
    display: flex;
    width: 937px;
    border: 1px solid #999;
    background: #f0f0f0;
    font-size: 14px;
    font-weight: 400;
}
.cell {
    display: grid;
    align-items: center;
    justify-items: end;
    padding-right: 3px;
    border-right: 1px solid #ccc;
}
.cell:last-child {
    border: 0;
}
.q-price {
    grid-template-columns: 92px 60px 60px;
    width: 215px;
}
.q-volume {
    grid-template-columns: 88px 71px 51px;
    width: 213px;
}
.q-amount {
    width: 103px;
}
.q-best {
    grid-template-columns: 46px 54px 64px;
    width: 175px;
}
.q-ohl {
    grid-template-columns: 16px 50px 24px 50px 24px 50px;
}
.up {
    color: #e8281c;
}
.down {
    color: #1c54c8;
}
.buy, .sell {
    width: 49px;
    border: 1px solid #999;
    background: #f8cccc;
}
.sell {
    background: #c4dcf4;
}

/* chart */
.chart {
    position: relative;
    margin-top: 5px;
}
#chart {
    width: 100%;
    height: auto;
    background: #fff;
}
#chart text {
    font-size: 14px;
    fill: #444;
}
#chart .note {
    font-size: 16px;
}
#chart .summary {
    font-size: 16px;
    font-weight: 700;
    text-anchor: end;
}
.legend {
    position: absolute;
    left: 4px;
    top: 0;
    display: flex;
    align-items: center;
    gap: 9px;
    font-size: 16px;
    font-weight: 400;
}
.legend .box {
    width: 6px;
    height: 8px;
    border: 1px solid #777;
    background: #bbb;
    margin-right: -3px;
}
.picked {
    padding: 0 4px;
    line-height: 18px;
    background: #e6e6e6;
    border: 1px solid #d0d0d0;
    font-weight: 300;
}
.teal { color: #109a80; }
.gray { color: #777; }
.purple { color: #a818d8; }
.orange { color: #f8a068; }
.blue { color: #6c8cf0; }
.magenta { color: #d410e0; }
.red { color: #f00000; }
.grid-btn {
    position: absolute;
    left: 6px;
    top: 24px;
    padding: 2px;
    border: 1px solid #222;
    background: #eee;
}

/* scrollbar line */
.scroll-row {
    display: flex;
    height: 26px;
    padding: 1px 3px 5px 4px;
    background: #efefef;
    margin: 0 -3px 0 -4px;
}
.sb {
    display: flex;
    align-items: center;
    justify-content: center;
    width: 21px;
    font-size: 9px;
    color: #000;
    border: 1px solid;
    border-color: #fff #888 #888 #fff;
    background: #eee;
}
.track {
    flex: 1;
    background: #f8f8f8;
}
.thumb {
    width: 26%;
    height: 100%;
    margin-left: auto;
    background: #eee;
    border: 1px solid;
    border-color: #fff #888 #888 #ccc;
}
.speed {
    appearance: none;
    width: 86px;
    height: 20px;
    margin: 0 6px;
    background: linear-gradient(#999, #999) 0 5px / 100% 2px no-repeat, repeating-linear-gradient(90deg, #222 0 1px, transparent 1px 8px) 1px 15px / 100% 4px no-repeat;
}
.speed::-webkit-slider-thumb {
    appearance: none;
    width: 4px;
    height: 12px;
    margin-top: -6px;
    background: #eee;
    border: 1px solid #888;
}
.mini-tools {
    display: flex;
    width: 280px;
    justify-content: space-between;
}
.mini-tools button {
    width: 20px;
    padding: 1px;
    color: #666;
}
.mini-tools .pressed {
    background: #fff;
    border-left: 1px solid #999;
    border-top: 1px solid #999;
}
.mini-tools svg {
    width: 18px;
    height: 18px;
    fill: none;
    stroke: #777;
}
.mini-tools .letter {
    font-weight: 700;
    font-size: 16px;
    line-height: 16px;
}

/* drawing palette */
.palette {
    width: 39px;
    display: flex;
    flex-direction: column;
    padding-left: 3px;
    background: #f0f0f0;
}
.grip {
    height: 3px;
    margin: 3px 2px 8px;
    background: repeating-linear-gradient(90deg, #bbb 0 2px, transparent 2px 5px);
}
.palette-tools {
    flex: 1;
    display: flex;
    flex-direction: column;
    justify-content: space-between;
}
.palette-tools button {
    width: 30px;
    height: 30px;
    margin-left: 1px;
    padding: 1px;
    border: 1px solid #999;
    background: #e8e7e2;
}
.palette-tools svg {
    width: 26px;
    height: 26px;
}
.ico-t {
    font: 700 17px "Liberation Serif", serif;
    fill: #1c2f8c;
}
.ico-all {
    font: 700 10px "Liberation Sans", sans-serif;
    fill: #10246e;
}
.palette-rest {
    height: 40px;
    margin-top: 5px;
    border-top: 2px solid #aaa;
    background: #fff;
}

/* window tabs */
.tabs {
    display: flex;
    height: 34px;
    font-size: 16px;
    color: #333;
    background: linear-gradient(#d0d0d0, #e4e4e4);
    border-top: 1px solid #ddd;
}
.handle {
    width: 15px;
    padding-left: 2px;
    font-size: 13px;
    line-height: 10px;
    color: #777;
}
.handle::after {
    content: "";
    display: block;
    width: 6px;
    height: 16px;
    margin: 3px 1px;
    border: 2px solid #eee;
    border-color: #eee #aaa;
}
.tabs button {
    display: flex;
    align-items: center;
    width: 136px;
    padding-left: 5px;
    overflow: hidden;
    border-right: 1px solid #eee;
}
.tabs button:nth-last-child(2) {
    border-right: 0;
}
.tabs .active {
    background: linear-gradient(#b0b0b0, #c4c4c4);
}
.tabs i {
    flex: none;
    width: 16px;
    margin-right: 8px;
    border-radius: 2px;
    background: #5c7cb8;
    color: #fff;
    font: 700 13px/18px "Liberation Sans", sans-serif;
}
.tabs .web {
    background: #38b0b8;
}
.tabs-end {
    display: flex;
    align-items: center;
    gap: 19px;
    margin-left: auto;
    padding-right: 4px;
}

/* ticker */
.ticker {
    display: grid;
    grid-template-columns: 15px 447px 447px 1fr;
    grid-template-rows: 29px 28px;
    row-gap: 1px;
    background: #dde3ee;
}
.ticker .handle {
    grid-row: 1 / 3;
    padding-top: 4px;
    background: #c4d2ec;
}
.ticker .handle::after {
    height: 36px;
}
.index, .news {
    display: flex;
    align-items: center;
    margin-right: 2px;
    background: #c4d2ec;
    min-width: 0;
}
.news {
    margin-right: 0;
}
.index b {
    width: 95px;
    align-self: stretch;
    padding-left: 10px;
    line-height: 27px;
    font-weight: 300;
    background: #b2c6ee;
}
.index p {
    flex: 1;
    display: flex;
    gap: 18px;
    margin: 0 0 0 14px;
    font-size: 14px;
    font-weight: 400;
    color: #111;
}
.index .wide {
    gap: 24px;
}
.index .rise {
    color: #dc3030;
}
.index .rise em {
    font-style: normal;
    color: #b01010;
}
.index .fall {
    color: #1010c8;
}
.ticker button {
    width: 32px;
    font-size: 7px;
    color: #666;
}
.news a {
    flex: 1;
    min-width: 0;
    padding-left: 9px;
    font-size: 16px;
    line-height: 26px;
}
.news time {
    width: 77px;
}
.news .source {
    width: 76px;
}
.side {
    width: 44px;
    align-self: stretch;
    line-height: 27px;
    text-align: center;
    border-left: 1px solid #dde3ee;
}
.side.wide {
    width: 120px;
    border: 0;
}
.cog {
    margin: 0 8px;
}

/* taskbar */
.taskbar {
    display: flex;
    align-items: center;
    height: 60px;
    padding-bottom: 3px;
    color: #fff;
    border-top: 1px solid #3a3a3a;
}
.weather {
    display: flex;
    align-items: center;
    gap: 10px;
    width: 395px;
    padding-left: 27px;
}
.weather small {
    font-size: 14px;
    color: #ccc;
}
.apps {
    display: flex;
    align-items: center;
    gap: 8px;
}
.apps button {
    position: relative;
    display: flex;
    align-items: center;
    justify-content: center;
    width: 47px;
    height: 50px;
    border-radius: 5px;
}
.apps > button:first-child {
    width: 52px;
    margin: 0 -1px 0 16px;
}
.apps .focus {
    background: #2e2e2e;
}
.apps .run::after {
    content: "";
    position: absolute;
    left: 20px;
    bottom: 1px;
    width: 7px;
    height: 4px;
    border-radius: 2px;
    background: #999;
}
.apps .focus::after {
    left: 14px;
    width: 19px;
    background: #4cc2ff;
}
.search {
    display: flex;
    align-items: center;
    width: 273px;
    height: 40px;
    margin-right: -1px;
    padding: 0 1px 0 12px;
    border-radius: 20px;
    background: #363636;
}
.search input {
    flex: 1;
    width: 100px;
    padding-left: 14px;
    font-size: 17px;
}
.search input::placeholder {
    color: #ddd;
}
.ico-talk {
    font: 700 8px "Liberation Sans", sans-serif;
    fill: #fae100;
}
.ico-s {
    font: 700 19px "Liberation Sans", sans-serif;
    fill: #fff;
}
.tray {
    display: flex;
    align-items: center;
    gap: 18px;
    margin-left: auto;
    padding-right: 25px;
}
.ime {
    width: 30px;
    font-size: 19px;
}
.status {
    display: flex;
    gap: 10px;
}
.tray time {
    margin-left: 2px;
    font-size: 16px;
    text-align: right;
}
.badge {
    width: 20px;
    margin-left: -8px;
    border-radius: 10px;
    background: #4cc2ff;
    color: #123;
    font-size: 13px;
    text-align: center;
}
```

FILE: chart.js
```js
const chart = document.getElementById('chart');
const LEFT = 14.3;
const STEP = 10.894;
const x = i => Math.round(LEFT + i * STEP);

// direction, high, body top, body bottom, low
const candles = `B476,483,496,498 R490,494,496,507 B496,498,521,522 B507,511,521,521 B519,523,527,532 R510,514,519,521 B505,509,527,529 R516,517,527,529 B515,521,525,527 B531,532,541,544
R535,535,545,545 B536,536,550,550 R458,459,541,541 B447,454,460,469 R370,415,429,439 R375,410,412,419 B411,411,436,437 B428,435,445,450 B399,414,433,434 R411,424,430,436
B424,425,453,457 B446,449,451,458 B443,455,457,459 B447,453,456,458 R436,443,456,467 B442,443,450,457 R451,451,459,460 R440,444,455,458 R430,433,437,444 R425,432,434,438
B400,415,427,428 R400,425,436,437 B409,410,422,430 R336,357,401,402 B354,358,367,375 B366,369,372,384 B371,375,386,391 B368,379,397,399 B390,396,400,407 B393,396,409,412
R394,399,406,409 B389,395,403,404 B396,400,409,413 B403,409,411,423 R398,399,412,416 R382,394,397,400 B382,385,393,395 B386,390,401,403 B398,400,409,419 B411,415,426,431
R422,425,432,438 R422,429,431,435 B418,419,430,437 R427,430,436,437 B426,429,441,443 R434,435,443,444 B433,439,443,446 B446,450,453,455 R448,453,455,461 B453,454,465,467
B459,462,467,468 R460,461,465,467 B467,469,477,479 R470,473,477,479 R467,470,475,477 B475,475,483,486 B483,484,495,496 R473,490,492,493 R481,487,496,501 R481,482,491,493
B479,481,487,491 R474,477,489,489 R468,471,473,475 B465,469,473,477 R465,468,472,473 R460,461,466,470 B458,461,464,466 B462,464,466,470 B464,465,473,473 R468,469,474,475
B470,474,477,481 R476,479,481,482 R472,475,478,479 R462,463,476,477 B458,460,468,469 B457,465,470,471 R465,468,472,475 B456,464,466,467 R455,457,462,465 B452,456,458,463
R448,451,460,463 R446,449,456,458 R436,439,449,452 R438,440,442,450 R428,439,443,461 B433,435,444,447 R420,437,440,446 R431,433,436,439 R368,375,430,432 R307,320,371,373
R293,299,317,333 R246,286,300,305 B297,300,304,313 R297,299,302,307 B285,296,327,344 R322,324,329,347 R317,324,330,335 B290,314,319,326 B302,316,335,346 R311,316,329,331
B317,323,345,351 R334,339,350,351 R295,316,340,346 R318,329,334,341 R305,311,329,343 B301,306,357,365 R302,310,345,345 B314,317,319,332 B313,314,351,351 R339,348,357,359
B347,350,356,362 B336,341,346,350 B343,351,353,360 R338,345,348,351 R285,311,344,350 R286,299,309,317 R250,254,305,311 B262,264,286,291 B261,279,291,307 R235,237,287,289
R224,246,257,271 R227,236,241,262 R186,206,230,233 B196,203,218,221 B171,205,232,238`.split(/\s+/).map(s => [s[0], ...s.slice(1).split(',').map(Number)]);

const lines = {
    upper: '14,412 57,392 73,388 93,388 112,393 133,402 144,410 156,415 167,410 177,400 199,403 209,398 220,392 241,384 271,378 282,376 318,376 340,384 352,400 362,403 373,387 384,378 416,362 455,355 476,355 498,357 515,359 547,365 565,363 582,363 604,372 624,380 640,380 671,379 679,381 705,383 722,391 738,401 754,411 777,419 798,430 820,440 842,450 864,455 893,459 918,459 936,456 952,457 971,456 987,455 1007,452 1028,445 1048,436 1072,428 1082,417 1093,382 1113,320 1126,302 1135,287 1146,273 1169,260 1180,252 1202,244 1235,244 1256,249 1280,270 1289,282 1300,292 1322,290 1332,299 1343,302 1354,307 1365,307 1376,300 1392,286 1408,278 1419,263 1430,250 1442,240 1452,225 1463,205 1474,196',
    middle: '14,446 35,449 57,457 80,463 101,471 118,481 133,488 153,492 176,489 204,489 224,485 245,480 265,475 286,467 320,456 339,446 355,438 373,431 394,428 420,423 441,420 469,414 490,409 515,403 547,399 582,399 608,408 640,417 677,428 701,434 722,443 742,452 767,460 791,465 824,471 856,474 893,476 934,476 962,472 995,468 1028,463 1072,458 1083,454 1093,447 1113,429 1135,412 1160,397 1180,383 1202,369 1235,352 1256,340 1280,329 1288,324 1300,321 1315,322 1335,329 1356,332 1382,330 1407,325 1430,317 1442,312 1452,305 1464,300 1474,294',
    turn: '14,457 35,470 57,474 68,475 80,489 90,493 112,517 123,521 133,528 141,512 149,502 156,498 161,480 167,462 222,459 233,457 243,420 253,415 265,419 276,432 296,432 318,446 329,446 340,433 361,433 366,420 373,399 394,399 406,391 420,387 441,387 451,382 460,374 470,383 482,395 504,396 515,402 537,404 557,410 592,410 612,415 624,423 635,433 648,441 668,444 689,452 711,456 728,470 740,473 756,479 779,483 809,484 832,482 856,476 869,473 885,469 962,469 983,466 1003,461 1028,455 1048,447 1060,441 1071,440 1081,417 1093,382 1104,371 1114,350 1126,349 1146,345 1171,339 1180,312 1190,297 1202,297 1213,318 1235,318 1252,320 1264,325 1280,329 1321,329 1332,333 1360,332 1370,324 1376,324 1387,307 1408,307 1419,295 1442,287 1452,268 1463,253 1474,242',
    base: '14,457 35,470 57,474 101,474 112,481 133,483 156,483 167,460 362,460 373,443 404,443 416,439 428,403 551,402 582,398 592,391 614,391 635,395 646,399 667,417 685,421 701,429 711,430 728,438 740,441 799,443 820,457 852,459 873,463 897,467 909,472 932,477 967,479 987,475 1007,472 1028,468 1044,458 1060,455 1072,449 1081,417 1092,393 1104,386 1114,363 1173,363 1191,360 1232,357 1280,352 1311,348 1325,347 1341,343 1356,338 1364,317 1370,307 1386,305 1398,308 1408,308 1419,299 1430,294 1442,294 1452,276 1463,276 1474,268',
    span1: '14,454 35,454 45,450 59,450 68,446 90,446 101,451 122,454 135,451 156,451 167,445 188,444 204,441 235,441 245,439 253,439 261,442 271,444 282,452 292,458 306,468 318,469 329,473 340,474 352,481 362,483 373,489 386,498 396,501 405,505 416,494 428,491 435,472 439,460 504,459 515,439 536,439 547,445 567,445 592,452 603,452 614,447 635,446 646,421 671,420 689,414 701,395 711,394 734,389 756,399 777,399 791,401 809,402 820,404 856,403 864,401 885,402 897,407 909,415 938,429 967,438 985,443 995,449 1009,456 1022,457 1028,461 1071,463 1088,469 1136,469 1146,468 1169,468 1177,471 1202,474 1246,474 1256,470 1269,469 1289,461 1300,461 1311,455 1322,453 1332,448 1343,446 1354,420 1365,388 1376,379 1387,357 1402,356 1421,354 1442,352 1452,335 1463,328 1474,328 1484,338 1496,339 1509,337 1531,337 1537,340 1562,339 1617,339 1627,335 1637,318 1649,314 1660,306 1682,306 1692,298 1702,293 1714,291 1725,272 1735,265 1747,255',
    span2: '14,470 151,470 157,467 302,467 318,460 329,466 373,466 386,474 396,481 408,483 429,483 439,460 635,460 648,443 973,442 978,430 983,408 995,412 1005,416 1020,417 1028,419 1202,419 1213,429 1224,433 1246,434 1256,440 1343,441 1354,435 1365,403 1376,396 1387,373 1586,373 1594,369 1617,367 1627,362 1682,362 1702,351 1714,351 1725,333 1735,333 1747,324',
    obv: '13,738 24,737 34,738 135,738 144,729 156,729 167,712 178,703 200,707 211,698 222,696 254,699 276,696 300,697 331,694 349,687 363,684 374,662 389,667 423,674 435,675 450,674 484,676 514,672 539,673 569,675 588,674 674,676 735,676 765,674 960,674 988,674 1030,672 1071,670 1082,663 1093,649 1105,641 1116,634 1150,635 1160,633 1170,635 1180,630 1190,633 1202,630 1214,632 1236,627 1245,628 1256,624 1266,627 1278,623 1294,626 1355,626 1366,617 1375,614 1387,600 1408,604 1420,598 1431,603 1442,601 1453,592 1464,594 1474,600',
    signal: '13,737 135,738 156,734 178,724 200,718 222,710 238,707 254,704 276,702 331,698 361,692 374,686 395,679 423,676 508,676 520,674 612,675 960,675 1070,672 1086,669 1116,655 1135,648 1159,643 1190,638 1236,633 1266,630 1278,628 1327,627 1357,626 1376,622 1401,614 1420,609 1442,606 1464,602 1474,602',
    bii: '13,854 24,853 31,854 133,854 145,818 156,819 167,837 178,847 199,851 210,863 222,863 233,866 245,864 263,866 282,863 309,863 318,862 331,863 349,870 363,871 374,842 386,843 398,842 416,847 508,847 511,848 651,848 652,849 1030,849 1037,848 1052,848 1055,849 1071,849 1082,836 1093,808 1103,798 1114,807 1147,808 1156,805 1170,805 1190,811 1212,813 1229,811 1247,810 1256,807 1267,813 1277,809 1288,807 1300,810 1355,810 1366,807 1376,806 1387,775 1407,780 1420,764 1438,763 1453,760 1463,762 1474,774'
};

// volume profile: right edge, top, bottom
const profile = [[703, 210, 243], [512, 245, 277], [815, 279, 311], [1620, 313, 345], [1402, 348, 380], [737, 381, 413], [1702, 415, 448], [888, 450, 482], [113, 484, 516], [84, 518, 551]];

let out = '';
const path = (d, color, width = 1, extra = '') => {
    out += `<path d="${d}" fill="none" stroke="${color}" stroke-width="${width}" ${extra}/>`;
};
const rect = (x1, y1, x2, y2, fill, stroke = 'none') => {
    out += `<rect x="${x1}" y="${y1}" width="${x2 - x1}" height="${y2 - y1}" fill="${fill}" stroke="${stroke}"/>`;
};
const text = (tx, ty, s, color = '', cls = '') => {
    out += `<text x="${tx}" y="${ty}" class="${cls}"${color ? ` style="fill:${color}"` : ''}>${s}</text>`;
};
const line = (name, color, width) => {
    out += `<polyline points="${lines[name]}" fill="none" stroke="${color}" stroke-width="${width}" stroke-linejoin="round"/>`;
};
function valueAt(name, px) {
    const pts = lines[name].split(' ').map(p => p.split(',').map(Number));
    for (let i = 1; i < pts.length; i++) {
        if (px <= pts[i][0]) {
            const [x0, y0] = pts[i - 1];
            const [x1, y1] = pts[i];
            return y0 + (y1 - y0) * (px - x0) / (x1 - x0);
        }
    }
    return pts[pts.length - 1][1];
}

// grid
const rows = [166, 204, 242, 279, 318, 355, 393, 431, 469, 506, 544, 593, 639, 685, 732, 787, 828, 868];
const months = [[63, '10'], [271, '11'], [511, '12'], [740, '2023/01'], [957, '02'], [1174, '03'], [1414, '04']];
path(rows.map(y => `M8 ${y}.5H1792`).join(''), '#ddd');
path(months.map(m => `M${m[0]}.5 150V874`).join(''), '#ddd');

// price panel
profile.forEach(([right, top, bottom], i) => {
    rect(9, top, right, bottom, '#00ffff', i ? 'none' : '#888');
    if (i > 1) path(`M9 ${top - 1}.5H${Math.min(right, profile[i - 1][0])}`, '#b0f4f4');
});
for (let i = 0; i < 160; i++) {
    const a = valueAt('span1', x(i));
    const b = valueAt('span2', x(i));
    if (Math.abs(a - b) > 2) path(`M${x(i)}.5 ${a}V${b}`, a < b ? '#f4a878' : '#6c94f4', 1.3);
}
line('span1', '#f8a470', 2.5);
line('span2', '#6c8cf0', 2.5);
const lagging = candles.slice(25).map((c, i) => `${x(i)},${c[0] === 'B' ? c[3] : c[2]}`);
out += `<polyline points="${lagging.join(' ')}" fill="none" stroke="#a41cdc" stroke-width="2"/>`;
line('turn', '#109a80', 3.5);
line('base', '#787878', 3.5);
line('upper', '#e80000', 3.5);
line('middle', '#d410e8', 3.5);
candles.forEach(([dir, high, top, bottom, low], i) => {
    const color = dir === 'R' ? '#e81c0c' : '#1458cc';
    path(`M${x(i)} ${high}V${low}`, color, 1.3);
    rect(x(i) - 4.5, top, x(i) + 4.5, Math.max(bottom, top + 2), color);
});
out += '<ellipse cx="1430" cy="342" rx="11" ry="28" fill="#e45cb8" stroke="#1414e0" stroke-width="1.5"/><path d="M1419.500 346h21q0 19-10.500 24-10.500-5-10.500-24z" fill="#1c5cbc"/><path d="M1420 353h20M1430 353v17" stroke="#082040" stroke-width="2"/>';
text(1320, 181, '최고 8,920 (04/10)', '#f00000', 'note');
path('M1452 176.500h12', '#f00000', 1.5);
out += '<path d="M1462 170l8 6.500-8 6.500z" fill="#f00000"/>';
text(157, 551, '최저 3,935 (10/13)', '#1010f0', 'note');
path('M144 546.500h11', '#1010f0', 1.5);
out += '<path d="M147 540l-8 6.500 8 6.500z" fill="#1010f0"/>';
text(673, 443, '배당락(0,00%)', '#444', 'note');
path('M722 448v18', '#e82010', 1.5);
out += '<path d="M715 465h14l-7 8z" fill="#e82010"/>';
[['전환선 9: 8,010', '#109a80'], ['기준선 26: 7,650', '#777'], ['후행스팬 26: 8,130', '#a818d8'], ['선행스팬1 9,26: 7,830', '#f8a068'], ['선행스팬2 52,26: 6,920', '#6c8cf0']]
    .forEach(([s, c], i) => text(1785, 504 + i * 15, s, c, 'summary'));

// OBV and BII panels
line('obv', '#ff6a00', 3.5);
line('signal', '#902090', 1.3);
line('bii', '#ff6a00', 3.5);
[[590, 'OBV', '#f86000'], [759, "Bostian's Intraday Intensity Index", '#f86000']].forEach(([y, s, c]) => {
    rect(13, y - 10, 18, y - 2, '#bbb', '#777');
    text(26, y, s, c, 'note');
});
text(67, 590, 'Signal 9', '#902090', 'note');

// crosshair, dark where it crosses the profile bars
path('M8 707H1791', '#ff3c3c', 1.8);
path('M1557 150V873', '#ff3c3c', 1.8);
path('M1557 313V345M1557 415V448', '#003030', 2);

// value axis
rect(1792, 150, 1873, 874, '#d6e1ef');
rect(8, 874, 1873, 896, '#d6e1ef');
for (let y = 189; y < 570; y += 7.56) path(`M1792 ${y}h3`, '#888');
for (let y = 580; y < 740; y += 9.25) path(`M1792 ${y}h3`, '#888');
for (let y = 757; y < 872; y += 8.1) path(`M1792 ${y}h3`, '#888');
path(rows.slice(1).map(y => `M1792 ${y}.5h7`).join(''), '#888');
['8,500', '', '7,500', '7,000', '6,500', '6,000', '5,500', '5,000', '4,500', '4,000', '500,000K', '400,000K', '300,000K', '200,000K', '125,000M', '100,000M']
    .forEach((s, i) => text(1802, rows[i + 1] + 4, s));
text(1793, 165, 'LC:106,61', '#e82020');
text(1793, 180, 'HC:-8,86', '#1c58c8');
rect(1798, 222, 1870, 238, '#1159cc');
text(1802, 235, '8,130', '#fff');
text(1802, 250, '-2,17%', '#1c58c8');
rect(1797, 697, 1871, 716, '#ffd968', '#111');
text(1802, 711, '253,632K');
[579, 748].forEach(y => {
    rect(1860, y, 1869, y + 9, '#444');
    path(`M1862 ${y + 2}l5 5m0-5l-5 5`, '#fff');
});

// date axis
text(10, 889, '2022/09');
months.forEach(([mx, s]) => {
    path(`M${mx}.5 874V896`, '#999');
    text(mx + 1, 889, s);
});
rect(1501, 875, 1611, 895, '#ffd968', '#111');
text(1504, 889, '2023/04/10(월)', '', 'day');
text(1802, 889, '04/10');
path('M8.500 150V896M1792.500 150V896M1873.500 150V896M8 150.500H1874M8 574.500H1874M8 743.500H1874M8 874.500H1874M8 896.500H1874', '#999');

chart.innerHTML = out;
```
